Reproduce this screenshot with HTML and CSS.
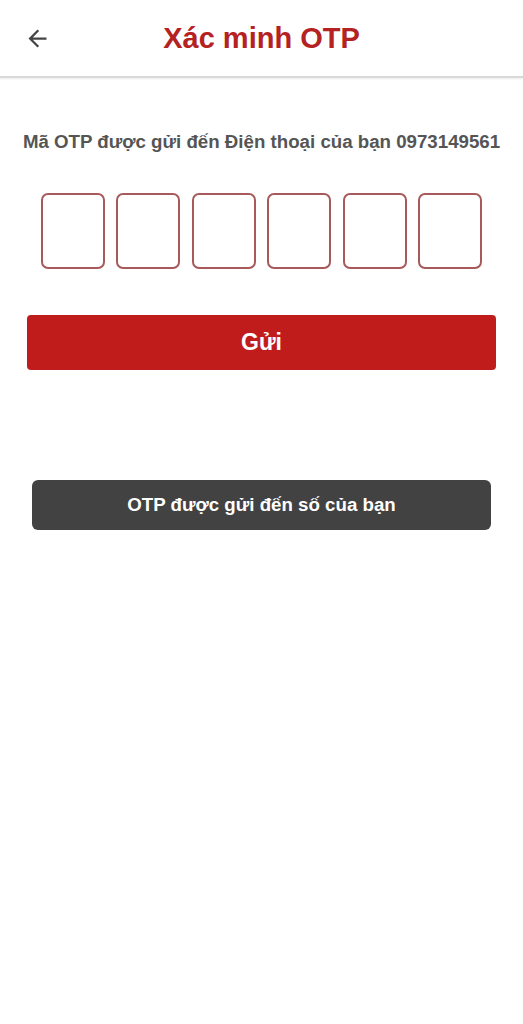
FILE: index.html
```html
<!DOCTYPE html>
<html lang="vi">
<head>
<meta charset="utf-8">
<title>Xác minh OTP</title>
<link rel="stylesheet" href="styles.css">
</head>
<body>
<div class="app">
  <header class="topbar">
    <button class="back" aria-label="Quay lại">
      <svg width="24" height="24" viewBox="0 0 24 24"><path d="M20 11H7.83l5.59-5.59L12 4l-8 8 8 8 1.41-1.41L7.83 13H20v-2z" fill="#444"/></svg>
    </button>
    <h1 class="title">Xác minh OTP</h1>
  </header>
  <main class="content">
    <p class="info">Mã OTP được gửi đến Điện thoại của bạn 0973149561</p>
    <div class="otp">
      <div class="cell"></div>
      <div class="cell"></div>
      <div class="cell"></div>
      <div class="cell"></div>
      <div class="cell"></div>
      <div class="cell"></div>
    </div>
    <button class="submit">Gửi</button>
    <div class="toast">OTP được gửi đến số của bạn</div>
  </main>
</div>
</body>
</html>
```

FILE: styles.css
```css
* { box-sizing: border-box; }
html, body {
  margin: 0;
  padding: 0;
  background: #fff;
  font-family: "Liberation Sans", Arial, sans-serif;
}
.app {
  width: 523px;
  min-height: 1024px;
  background: #fff;
}
.topbar {
  position: relative;
  height: 78px;
  display: flex;
  align-items: center;
  justify-content: center;
  border-bottom: 2px solid #d9d9d9;
  box-shadow: 0 1px 2px rgba(0,0,0,0.08);
}
.back {
  position: absolute;
  left: 24px;
  top: 25px;
  width: 27px;
  height: 27px;
  padding: 0;
  border: 0;
  background: none;
  display: flex;
  align-items: center;
  justify-content: center;
}
.back svg { width: 27px; height: 27px; }
.title {
  margin: 0;
  font-size: 29px;
  font-weight: bold;
  color: #b52222;
}
.content {
  display: flex;
  flex-direction: column;
  align-items: center;
  padding-top: 52px;
}
.info {
  margin: 0;
  font-size: 18.7px;
  font-weight: bold;
  color: #555;
  line-height: 24px;
  white-space: nowrap;
}
.otp {
  display: flex;
  gap: 11.6px;
  margin-top: 39px;
}
.cell {
  width: 64px;
  height: 76px;
  border: 2px solid #a85a5a;
  border-radius: 7px;
}
.submit {
  margin-top: 46px;
  width: 469px;
  height: 55px;
  border: 0;
  border-radius: 4px;
  background: #c01c1c;
  color: #fff;
  font-family: "Liberation Sans", Arial, sans-serif;
  font-size: 23px;
  font-weight: bold;
  align-self: flex-start;
  margin-left: 27px;
}
.toast {
  margin-top: 110px;
  width: 459px;
  height: 50px;
  border-radius: 6px;
  background: #424242;
  color: #fff;
  font-size: 18.7px;
  font-weight: bold;
  display: flex;
  align-items: center;
  justify-content: center;
}
```
